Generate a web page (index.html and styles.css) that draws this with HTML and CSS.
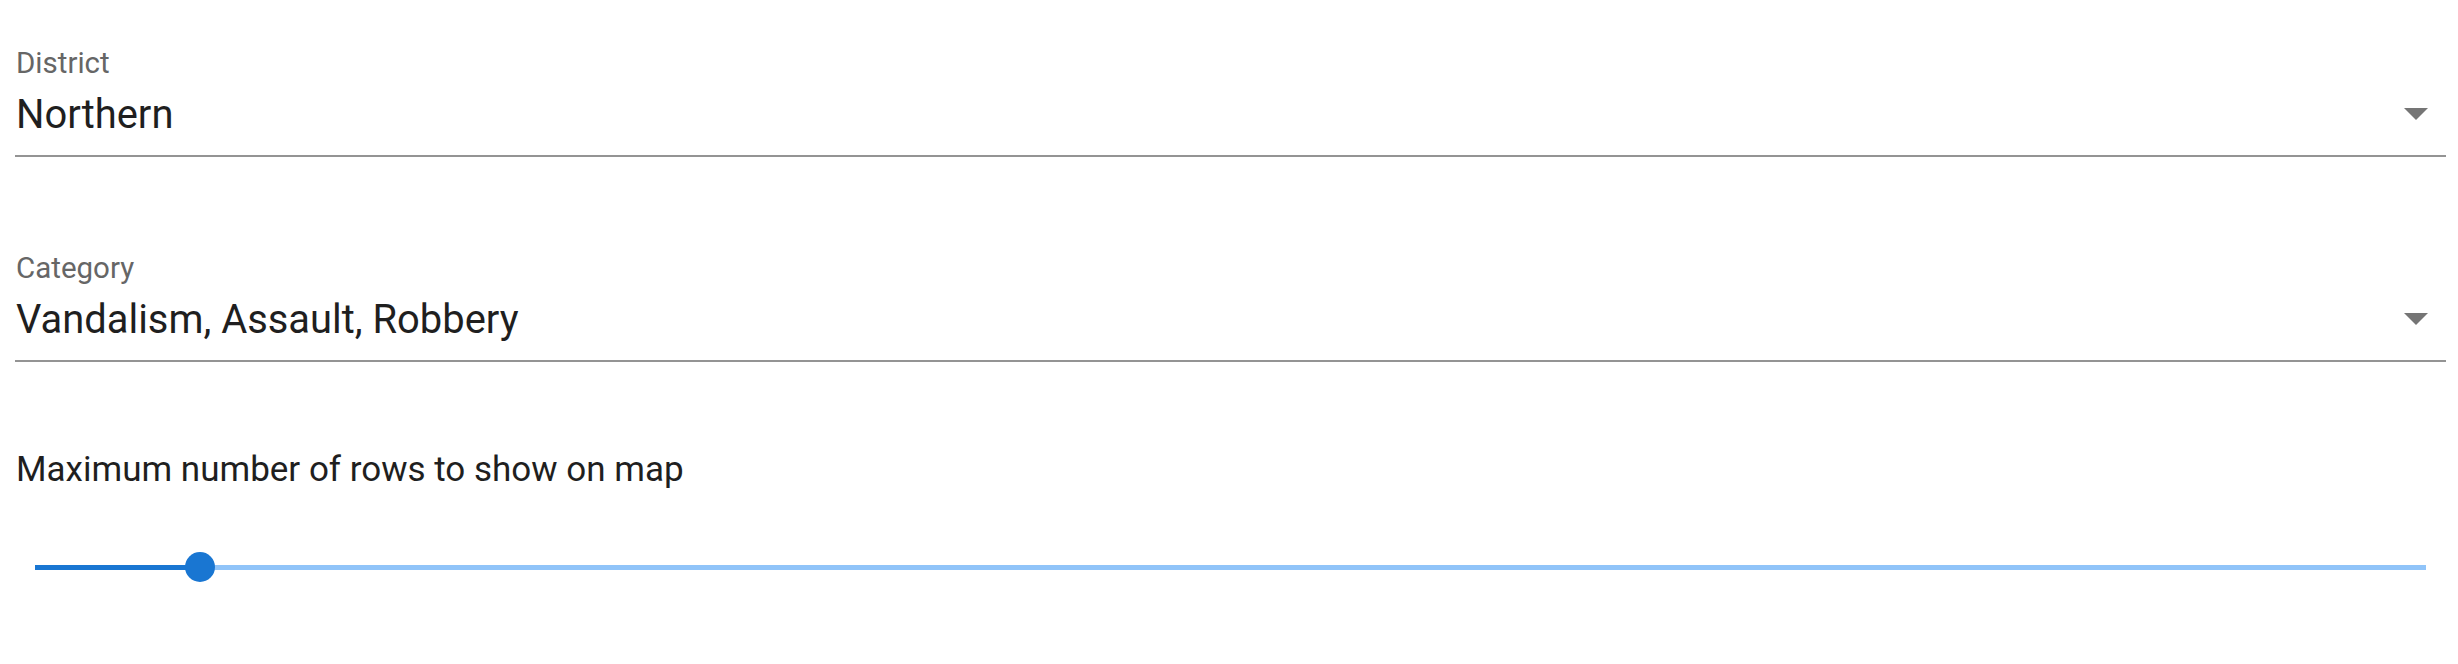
FILE: index.html
```html
<!DOCTYPE html>
<html lang="en">
<head>
<meta charset="utf-8">
<title>Filters</title>
<link rel="stylesheet" href="styles.css">
</head>
<body>
<div class="form">
  <div class="field">
    <div class="label">District</div>
    <div class="control">
      <span class="value">Northern</span>
      <svg class="arrow" width="24" height="12" viewBox="0 0 24 12"><polygon points="0,0 24,0 12,12" fill="#757575"/></svg>
    </div>
  </div>
  <div class="field">
    <div class="label">Category</div>
    <div class="control">
      <span class="value">Vandalism, Assault, Robbery</span>
      <svg class="arrow" width="24" height="12" viewBox="0 0 24 12"><polygon points="0,0 24,0 12,12" fill="#757575"/></svg>
    </div>
  </div>
  <div class="slider-block">
    <div class="slider-label">Maximum number of rows to show on map</div>
    <div class="slider">
      <div class="track">
        <div class="track-active" style="width: 6.9%"></div>
        <div class="track-rest"></div>
        <div class="thumb" style="left: 6.9%"></div>
      </div>
    </div>
  </div>
</div>
</body>
</html>
```

FILE: styles.css
```css
html, body {
  margin: 0;
  padding: 0;
  background: #ffffff;
}
body {
  font-family: Roboto, "Liberation Sans", sans-serif;
  color: #212121;
}
.form {
  padding: 49px 12px 0 15px;
  display: flex;
  flex-direction: column;
  gap: 97px;
}
.field {
  display: flex;
  flex-direction: column;
}
.label {
  font-size: 29.5px;
  line-height: 28px;
  height: 28px;
  color: #666666;
  margin-left: 1px;
}
.control {
  margin-top: 11px;
  display: flex;
  align-items: center;
  justify-content: space-between;
  padding: 0 18px 13px 0;
  border-bottom: 2px solid #949494;
}
.value {
  font-size: 39.9px;
  line-height: 54px;
  color: #1f1f1f;
  margin-left: 1px;
}
.arrow {
  display: block;
  margin-top: -2px;
}
.slider-block {
  margin-top: -14px;
}
.slider-label {
  font-size: 35px;
  line-height: 50px;
  color: #1f1f1f;
  margin-left: 1px;
}
.slider {
  margin-top: 57px;
  padding: 0 20px;
  height: 30px;
  display: flex;
  align-items: center;
}
.track {
  position: relative;
  flex: 1;
  display: flex;
  height: 5px;
}
.track-active {
  background: #1976d2;
  height: 5px;
}
.track-rest {
  flex: 1;
  background: #90c4f9;
  height: 5px;
}
.thumb {
  position: absolute;
  top: 50%;
  width: 30px;
  height: 30px;
  border-radius: 50%;
  background: #1976d2;
  transform: translate(-50%, -50%);
}
```
